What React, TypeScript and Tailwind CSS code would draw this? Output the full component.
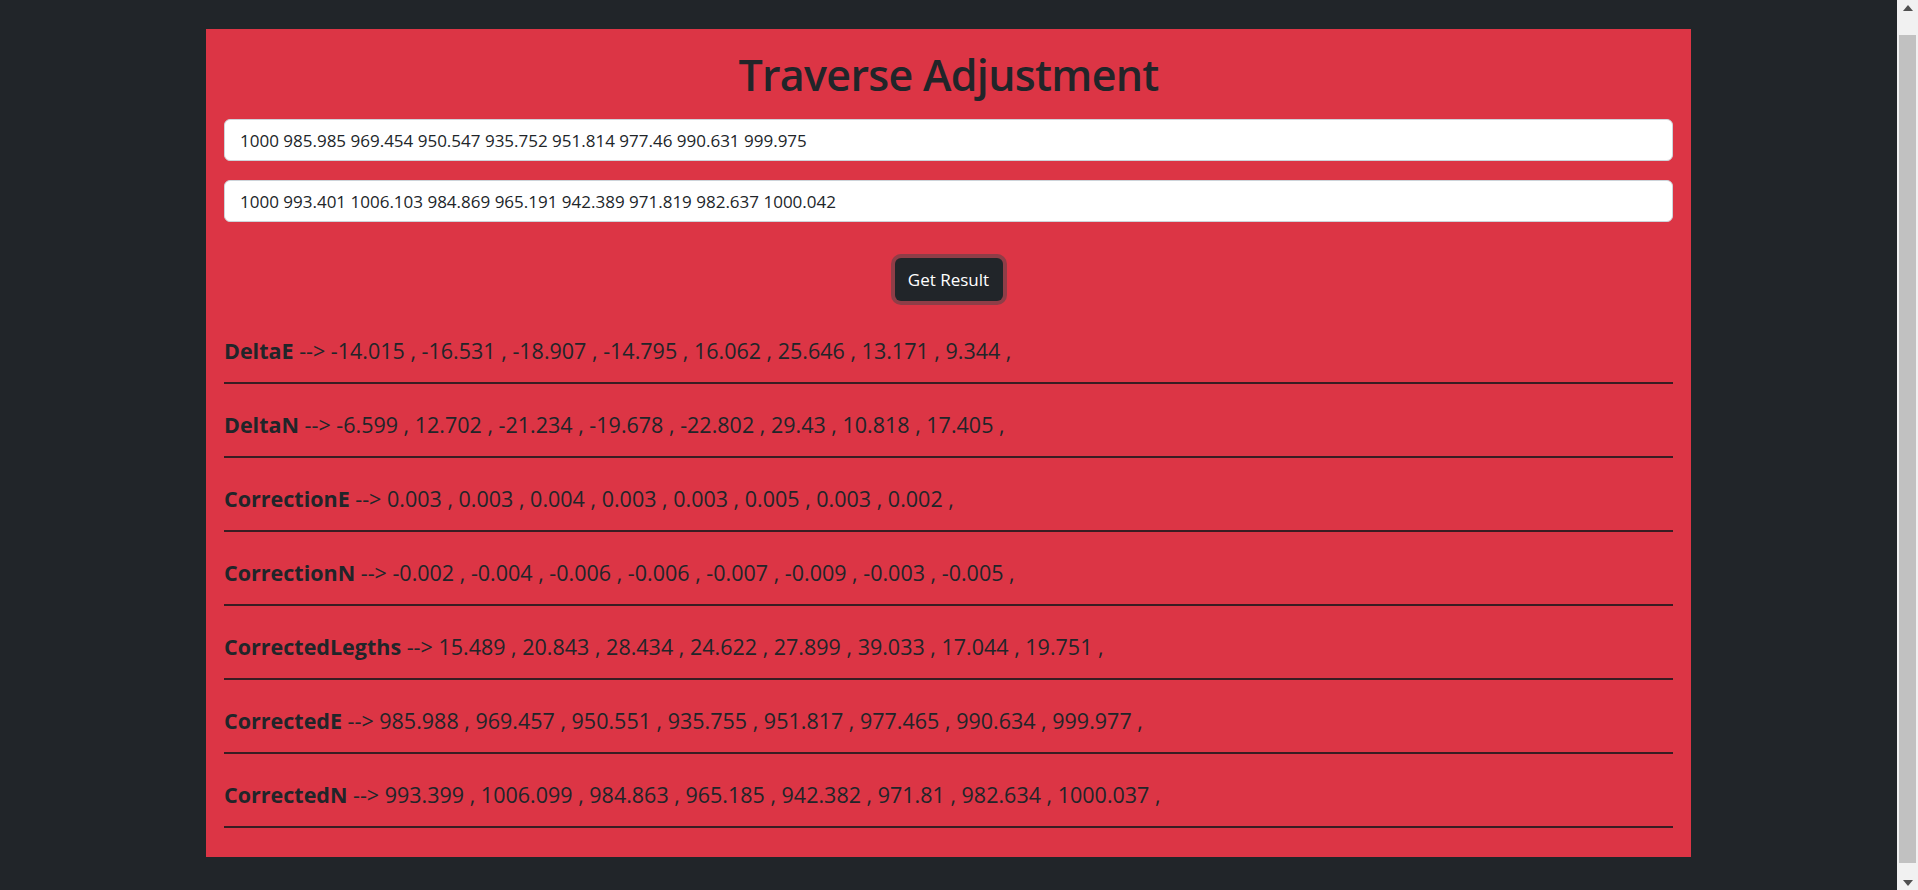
import React from "react";

const rows: { label: string; values: string[] }[] = [
  { label: "DeltaE", values: ["-14.015", "-16.531", "-18.907", "-14.795", "16.062", "25.646", "13.171", "9.344"] },
  { label: "DeltaN", values: ["-6.599", "12.702", "-21.234", "-19.678", "-22.802", "29.43", "10.818", "17.405"] },
  { label: "CorrectionE", values: ["0.003", "0.003", "0.004", "0.003", "0.003", "0.005", "0.003", "0.002"] },
  { label: "CorrectionN", values: ["-0.002", "-0.004", "-0.006", "-0.006", "-0.007", "-0.009", "-0.003", "-0.005"] },
  { label: "CorrectedLegths", values: ["15.489", "20.843", "28.434", "24.622", "27.899", "39.033", "17.044", "19.751"] },
  { label: "CorrectedE", values: ["985.988", "969.457", "950.551", "935.755", "951.817", "977.465", "990.634", "999.977"] },
  { label: "CorrectedN", values: ["993.399", "1006.099", "984.863", "965.185", "942.382", "971.81", "982.634", "1000.037"] },
];

function Scrollbar() {
  return (
    <div className="flex h-full w-[21px] shrink-0 flex-col bg-[#f1f1f1]">
      <div className="flex h-[35px] justify-center pt-[5px]">
        <svg width="10" height="6" viewBox="0 0 10 6">
          <path d="M5 0 L10 6 L0 6 Z" fill="#505050" />
        </svg>
      </div>
      <div className="mx-[2px] flex-1 bg-[#c1c1c1]" />
      <div className="flex h-[27px] items-end justify-center pb-[4px]">
        <svg width="10" height="6" viewBox="0 0 10 6">
          <path d="M0 0 L10 0 L5 6 Z" fill="#505050" />
        </svg>
      </div>
    </div>
  );
}

export default function App() {
  return (
    <div
      className="flex h-screen overflow-hidden bg-[#212529] text-[#212529]"
      style={{ fontFamily: '"Open Sans", "Noto Sans", "Liberation Sans", sans-serif' }}
    >
      <div className="min-w-0 flex-1 pt-[29px]">
        <div className="mx-auto w-[1485px] bg-[#dc3545] px-[18px] pt-[16px]">
          <h1 className="text-center text-[43px] leading-[59px] font-semibold tracking-[-0.7px]">
            Traverse Adjustment
          </h1>
          <input
            className="mt-[15px] block h-[42px] w-full rounded-[6px] border border-[#ced4da] bg-white px-[15px] text-[17px] text-[#212529] outline-none"
            defaultValue="1000 985.985 969.454 950.547 935.752 951.814 977.46 990.631 999.975"
          />
          <input
            className="mt-[19px] block h-[42px] w-full rounded-[6px] border border-[#ced4da] bg-white px-[15px] text-[17px] text-[#212529] outline-none"
            defaultValue="1000 993.401 1006.103 984.869 965.191 942.389 971.819 982.637 1000.042"
          />
          <div className="mt-[36px] flex justify-center">
            <button className="h-[43px] w-[108px] rounded-[6px] bg-[#212529] text-[17px] text-white shadow-[0_0_0_4px_rgba(66,70,73,0.5)]">
              Get Result
            </button>
          </div>
          <div className="mt-[38px] flex flex-col">
            {rows.map((r) => (
              <div key={r.label} className="flex flex-col">
                <div className="text-[21.5px] leading-[24px] font-normal whitespace-nowrap">
                  <span className="font-bold">{r.label}</span>
                  {" --> " + r.values.join(" , ") + " ,"}
                </div>
                <div className="mt-[19px] mb-[29px] h-[2px] bg-[#3a1c22]" />
              </div>
            ))}
          </div>
        </div>
      </div>
      <Scrollbar />
    </div>
  );
}
